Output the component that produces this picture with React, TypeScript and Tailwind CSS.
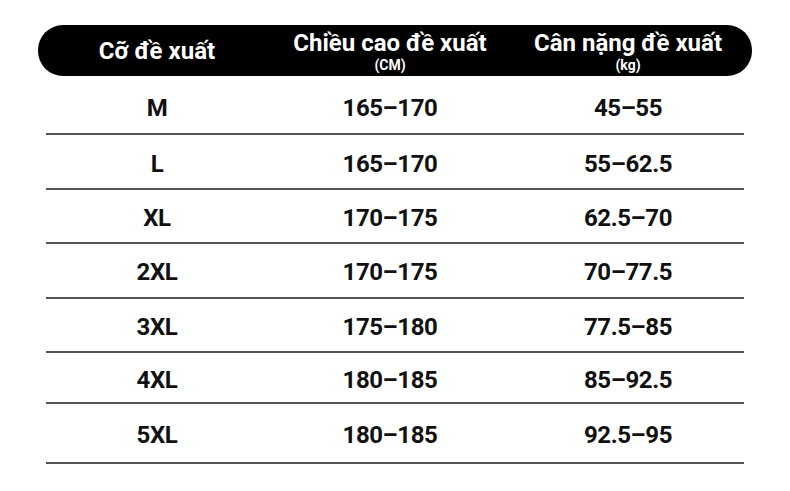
const rows = [
  { size: 'M', height: '165–170', weight: '45–55', h: 'h-[59px]', pt: 'pt-[6px]' },
  { size: 'L', height: '165–170', weight: '55–62.5', h: 'h-[55px]', pt: 'pt-[4px]' },
  { size: 'XL', height: '170–175', weight: '62.5–70', h: 'h-[54px]', pt: 'pt-[3px]' },
  { size: '2XL', height: '170–175', weight: '70–77.5', h: 'h-[55px]', pt: 'pt-[3px]' },
  { size: '3XL', height: '175–180', weight: '77.5–85', h: 'h-[54px]', pt: 'pt-[3px]' },
  { size: '4XL', height: '180–185', weight: '85–92.5', h: 'h-[51px]', pt: 'pt-[5px]' },
  { size: '5XL', height: '180–185', weight: '92.5–95', h: 'h-[60px]', pt: 'pt-[4px]' },
];

export default function App() {
  return (
    <div className="h-[491px] w-[790px] bg-white pt-[25px] font-['Roboto',sans-serif]">
      <div className="mx-[38px] grid h-[51px] grid-cols-[238px_228px_1fr] items-center rounded-[25px] bg-black text-white">
        <div className="text-center text-[24px] font-bold leading-none">Cỡ đề xuất</div>
        <div className="flex flex-col items-center gap-[3px]">
          <span className="text-[24px] font-bold leading-[26px]">Chiều cao đề xuất</span>
          <span className="text-[14px] font-bold leading-[13px]">(CM)</span>
        </div>
        <div className="flex flex-col items-center gap-[3px]">
          <span className="text-[24px] font-bold leading-[26px]">Cân nặng đề xuất</span>
          <span className="text-[14px] font-bold leading-[13px]">(kg)</span>
        </div>
      </div>

      <div className="mx-[46px]">
        {rows.map((row) => (
          <div
            key={row.size}
            className={`grid grid-cols-[222px_244px_1fr] items-center border-b-2 border-[#555] text-center text-[24px] font-bold leading-none tracking-[-0.4px] text-[#111] ${row.h} ${row.pt}`}
          >
            <div>{row.size}</div>
            <div>{row.height}</div>
            <div>{row.weight}</div>
          </div>
        ))}
      </div>
    </div>
  );
}
